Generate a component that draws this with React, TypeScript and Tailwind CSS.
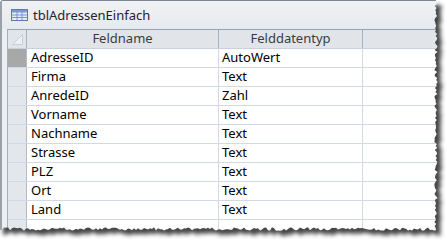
const rows: [string, string][] = [
  ['AdresseID', 'AutoWert'],
  ['Firma', 'Text'],
  ['AnredeID', 'Zahl'],
  ['Vorname', 'Text'],
  ['Nachname', 'Text'],
  ['Strasse', 'Text'],
  ['PLZ', 'Text'],
  ['Ort', 'Text'],
  ['Land', 'Text'],
  ['', ''],
];

// small deterministic jitter for the torn paper edge
const jitter = (i: number) => {
  const v = Math.sin(i * 12.9898 + 4.1) * 43758.5453;
  return v - Math.floor(v) - 0.5;
};

function tornEdge() {
  const pts: string[] = [];
  for (let y = 0; y <= 229; y += 2) pts.push(`${436 + jitter(y) * 3.4},${y}`);
  for (let x = 436; x >= -2; x -= 2) pts.push(`${x},${229 + jitter(x + 500) * 3.4}`);
  return pts;
}

function TableIcon() {
  return (
    <svg width="17" height="12" viewBox="0 0 17 12">
      <rect x="0.5" y="0.5" width="16" height="11" fill="#e4ecf8" stroke="#5b78b8" />
      <rect x="1" y="1" width="15" height="2.5" fill="#7d99d6" />
      <path d="M1 6h15M1 8.5h15M6 1v10M11 1v10" stroke="#7d96cc" strokeWidth="1" />
    </svg>
  );
}

function TornOverlay() {
  const pts = tornEdge();
  const edge = pts.join(' L');
  const outside = `M447,-2 L${edge} L-2,242 L447,242 Z`;
  const paper = `M-2,-2 L${edge} Z`;
  return (
    <svg className="absolute inset-0 pointer-events-none" width="447" height="240" viewBox="0 0 447 240">
      <defs>
        <clipPath id="outside">
          <path d={outside} />
        </clipPath>
        <filter id="blur" x="-10%" y="-10%" width="120%" height="120%">
          <feGaussianBlur stdDeviation="2" />
        </filter>
      </defs>
      <path d={outside} fill="#ffffff" />
      <g clipPath="url(#outside)">
        <path d={paper} transform="translate(5,5)" fill="#3a3a3a" filter="url(#blur)" opacity="0.95" />
      </g>
    </svg>
  );
}

export default function App() {
  return (
    <div className="relative w-[447px] h-[240px] overflow-hidden bg-white font-['Noto_Sans',sans-serif] text-[13px]">
      <div className="h-[250px] w-[440px] border-l-2 border-t border-l-[#9aa1aa] border-t-[#7c8591] rounded-tl-[3px] bg-[#eceef2] flex flex-col">
        <div className="h-[28px] flex items-center pl-[9px] gap-[5px] bg-gradient-to-b from-[#f1f2f5] to-[#e6e9ee]">
          <TableIcon />
          <span className="text-[#1d2433] leading-none">tblAdressenEinfach</span>
        </div>
        <div className="ml-[5px] flex-1 border-l border-t border-l-[#a5adb8] border-t-[#9aa2ad] bg-white">
          <div className="flex h-[19px] bg-[#e1e5ea] border-b border-[#c9d0da] text-[#3b3b3b]">
            <div className="w-[19px] shrink-0 border-r border-[#a9b1bc] flex items-end justify-center pb-[3px]">
              <svg width="11" height="11" viewBox="0 0 11 11">
                <path d="M0.5 10.5L10.5 0.5V10.5Z" fill="#eceff3" stroke="#c8cdd4" />
              </svg>
            </div>
            <div className="w-[192px] shrink-0 border-r border-[#a9b1bc] flex items-center justify-center">Feldname</div>
            <div className="w-[144px] shrink-0 border-r border-[#a9b1bc] flex items-center justify-center">Felddatentyp</div>
            <div className="flex-1" />
          </div>
          {rows.map(([name, type], i) => (
            <div key={i} className="flex h-[19px] border-b border-[#d3d9e4] text-black">
              <div
                className={
                  i === 0
                    ? 'w-[19px] shrink-0 border-r border-[#b4bac3] bg-[#a8a8a8]'
                    : 'w-[19px] shrink-0 border-r border-[#b4bac3] bg-[#e3e6eb]'
                }
              />
              <div className="w-[192px] shrink-0 border-r border-[#d3d9e4] pl-[4px] flex items-center">{name}</div>
              <div className="w-[144px] shrink-0 border-r border-[#d3d9e4] pl-[3px] flex items-center">{type}</div>
              <div className="flex-1" />
            </div>
          ))}
        </div>
      </div>
      <TornOverlay />
    </div>
  );
}
